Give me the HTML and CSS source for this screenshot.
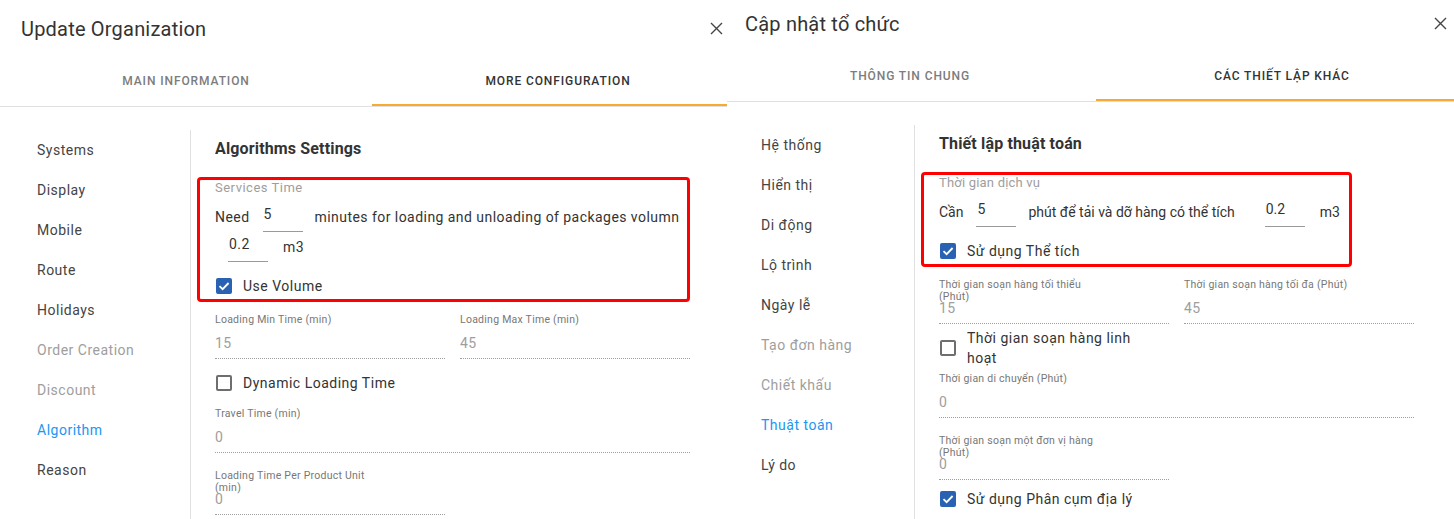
FILE: index.html
```html
<!DOCTYPE html>
<html lang="en">
<head>
<meta charset="utf-8">
<title>Update Organization</title>
<link rel="stylesheet" href="styles.css">
</head>
<body>
<div class="page">
  <section class="shot">
    <div class="dialog">
      <header class="dlg-head">
        <h1 class="dlg-title">Update Organization</h1>
        <button class="close" aria-label="Close"><svg width="13" height="13" viewBox="0 0 13 13"><path d="M1 1L12 12M12 1L1 12" stroke="#444" stroke-width="1.4" fill="none"/></svg></button>
      </header>
      <nav class="tabs">
        <div class="tab">MAIN INFORMATION</div>
        <div class="tab active">MORE CONFIGURATION</div>
      </nav>
      <div class="dlg-body">
        <ul class="side">
          <li>Systems</li>
          <li>Display</li>
          <li>Mobile</li>
          <li>Route</li>
          <li>Holidays</li>
          <li class="disabled">Order Creation</li>
          <li class="disabled">Discount</li>
          <li class="active">Algorithm</li>
          <li>Reason</li>
        </ul>
        <main class="content">
          <h2 class="sec-title">Algorithms Settings</h2>
          <div class="hl">
            <div class="sec-label">Services Time</div>
            <div class="inline-row">
              <span class="txt">Need</span>
              <span class="num">5</span>
              <span class="txt">minutes for loading and unloading of packages volumn</span>
              <span class="num">0.2</span>
              <span class="txt unit">m3</span>
            </div>
            <div class="check in-box">
              <span class="cb on"><svg width="16" height="16" viewBox="0 0 16 16"><path d="M3.5 8.2L6.6 11.2L12.6 5" stroke="#fff" stroke-width="1.8" fill="none"/></svg></span>
              <span class="check-label">Use Volume</span>
            </div>
          </div>
          <div class="fields">
            <div class="field">
              <div class="f-label">Loading Min Time (min)</div>
              <div class="f-value">15</div>
            </div>
            <div class="field">
              <div class="f-label">Loading Max Time (min)</div>
              <div class="f-value">45</div>
            </div>
            <div class="check row-check">
              <span class="cb"></span>
              <span class="check-label">Dynamic Loading Time</span>
            </div>
            <div class="field full">
              <div class="f-label">Travel Time (min)</div>
              <div class="f-value">0</div>
            </div>
            <div class="field last">
              <div class="f-label">Loading Time Per Product Unit (min)</div>
              <div class="f-value">0</div>
            </div>
          </div>
        </main>
      </div>
    </div>
  </section>

  <section class="shot">
    <div class="dialog shifted">
      <header class="dlg-head">
        <h1 class="dlg-title">Cập nhật tổ chức</h1>
        <button class="close" aria-label="Đóng"><svg width="13" height="13" viewBox="0 0 13 13"><path d="M1 1L12 12M12 1L1 12" stroke="#444" stroke-width="1.4" fill="none"/></svg></button>
      </header>
      <nav class="tabs">
        <div class="tab">THÔNG TIN CHUNG</div>
        <div class="tab active">CÁC THIẾT LẬP KHÁC</div>
      </nav>
      <div class="dlg-body">
        <ul class="side">
          <li>Hệ thống</li>
          <li>Hiển thị</li>
          <li>Di động</li>
          <li>Lộ trình</li>
          <li>Ngày lễ</li>
          <li class="disabled">Tạo đơn hàng</li>
          <li class="disabled">Chiết khấu</li>
          <li class="active">Thuật toán</li>
          <li>Lý do</li>
        </ul>
        <main class="content">
          <h2 class="sec-title">Thiết lập thuật toán</h2>
          <div class="hl">
            <div class="sec-label tight">Thời gian dịch vụ</div>
            <div class="inline-row tight">
              <span class="txt">Cần</span>
              <span class="num">5</span>
              <span class="txt wide-gap">phút để tải và dỡ hàng có thể tích</span>
              <span class="num">0.2</span>
              <span class="txt unit">m3</span>
            </div>
            <div class="check in-box">
              <span class="cb on"><svg width="16" height="16" viewBox="0 0 16 16"><path d="M3.5 8.2L6.6 11.2L12.6 5" stroke="#fff" stroke-width="1.8" fill="none"/></svg></span>
              <span class="check-label">Sử dụng Thể tích</span>
            </div>
          </div>
          <div class="fields">
            <div class="field">
              <div class="f-label">Thời gian soạn hàng tối thiểu (Phút)</div>
              <div class="f-value">15</div>
            </div>
            <div class="field">
              <div class="f-label">Thời gian soạn hàng tối đa (Phút)</div>
              <div class="f-value">45</div>
            </div>
            <div class="check row-check">
              <span class="cb"></span>
              <span class="check-label">Thời gian soạn hàng linh hoạt</span>
            </div>
            <div class="field full">
              <div class="f-label">Thời gian di chuyển (Phút)</div>
              <div class="f-value">0</div>
            </div>
            <div class="field last">
              <div class="f-label">Thời gian soạn một đơn vị hàng (Phút)</div>
              <div class="f-value">0</div>
            </div>
            <div class="check row-check">
              <span class="cb on"><svg width="16" height="16" viewBox="0 0 16 16"><path d="M3.5 8.2L6.6 11.2L12.6 5" stroke="#fff" stroke-width="1.8" fill="none"/></svg></span>
              <span class="check-label">Sử dụng Phân cụm địa lý</span>
            </div>
          </div>
        </main>
      </div>
    </div>
  </section>
</div>
</body>
</html>
```

FILE: styles.css
```css
* { box-sizing: border-box; }

html, body {
  margin: 0;
  padding: 0;
  background: #fff;
}

body {
  font-family: Roboto, "Noto Sans", "Liberation Sans", sans-serif;
  color: #333;
  font-size: 14px;
}

.page {
  display: flex;
  width: 1454px;
  height: 519px;
  overflow: hidden;
}

.shot {
  flex: none;
  width: 727px;
  height: 519px;
  overflow: hidden;
  background: #fff;
}

.dialog {
  width: 744px;
}

.dialog.shifted {
  margin-left: -3px;
  margin-top: -5px;
}

/* header */
.dlg-head {
  height: 57px;
  display: flex;
  align-items: center;
  justify-content: space-between;
  padding: 0 21px 0 21px;
}

.dlg-title {
  margin: 0;
  font-size: 20px;
  font-weight: 400;
  letter-spacing: 0.2px;
  color: #333;
  line-height: 24px;
}

.close {
  border: 0;
  background: none;
  padding: 0;
  width: 13px;
  height: 13px;
  display: flex;
}

/* tabs */
.tabs {
  display: flex;
  border-bottom: 1px solid #e0e0e0;
}

.tab {
  flex: 1;
  height: 49px;
  line-height: 48px;
  text-align: center;
  font-size: 12px;
  font-weight: 500;
  letter-spacing: 0.9px;
  color: #7c7c7c;
}

.tab.active {
  color: #333;
  box-shadow: inset 0 -2px 0 #f7a934;
}

/* body */
.dlg-body {
  display: flex;
  padding-top: 23px;
}

.side {
  list-style: none;
  margin: 0;
  padding: 0;
  flex: none;
  width: 191px;
  min-height: 420px;
  border-right: 1px solid #e0e0e0;
}

.side li {
  height: 40px;
  line-height: 40px;
  padding-left: 37px;
  font-size: 14px;
  letter-spacing: 0.5px;
  color: #444;
}

.side li.disabled { color: #9e9e9e; }
.side li.active { color: #2196f3; }

.content {
  padding: 9px 0 0 24px;
  width: 499px;
}

.sec-title {
  margin: 0 0 18px;
  font-size: 16px;
  line-height: 20px;
  font-weight: 700;
  letter-spacing: 0.15px;
  color: #333;
}

/* highlighted block */
.hl {
  width: fit-content;
  max-width: 493px;
  margin-left: -18px;
  padding: 0 5px 1px 15px;
  border: 3px solid #ff0000;
  border-radius: 4px;
}

.sec-label {
  font-size: 13px;
  line-height: 15px;
  letter-spacing: 0.5px;
  color: #9e9e9e;
}

.sec-label.tight { letter-spacing: 0.2px; }

.inline-row {
  display: flex;
  flex-wrap: wrap;
  align-items: flex-start;
  margin-top: 7px;
  letter-spacing: 0.45px;
}

.inline-row.tight { letter-spacing: 0; }

.txt {
  line-height: 30px;
  font-size: 14px;
  color: #333;
  white-space: nowrap;
}

.txt.unit { margin-left: 3px; }
.inline-row.tight .txt.unit { margin-right: 4px; }
.txt.wide-gap { margin-right: 17px; }

.num {
  width: 40px;
  height: 30px;
  margin: 0 12px 0 13px;
  padding-left: 1px;
  line-height: 24px;
  border-bottom: 1px solid #9a9a9a;
  color: #333;
  font-size: 14px;
}

/* checkbox */
.check {
  display: flex;
  align-items: center;
  height: 24px;
  padding-left: 1px;
}

.check.in-box { margin-top: 12px; }

.cb {
  flex: none;
  width: 16px;
  height: 16px;
  border: 2px solid #6e6e6e;
  border-radius: 2px;
  display: flex;
  align-items: center;
  justify-content: center;
}

.cb.on {
  border: 0;
  background: #2a62b3;
}

.check-label {
  margin-left: 11px;
  font-size: 14px;
  line-height: 20px;
  letter-spacing: 0.5px;
  color: #333;
}

.row-check .check-label { max-width: 172px; }

/* fields */
.fields {
  display: grid;
  grid-template-columns: 230px 230px;
  column-gap: 15px;
  margin-top: 12px;
  width: 475px;
}

.row-check {
  grid-column: 1 / span 2;
  margin-bottom: 13px;
}

.field {
  position: relative;
  padding-top: 16px;
  border-bottom: 1px dotted #9e9e9e;
  margin-bottom: 12px;
}

.field.full {
  grid-column: 1 / span 2;
  margin-bottom: 17px;
}

.field.last { margin-bottom: 7px; grid-column: 1; }

.f-label {
  position: absolute;
  top: 0;
  left: 0;
  max-width: 170px;
  font-size: 10.5px;
  line-height: 12px;
  letter-spacing: 0.25px;
  color: #777;
}

.f-value {
  height: 28px;
  line-height: 27px;
  font-size: 14px;
  letter-spacing: 0.3px;
  color: #9e9e9e;
}
```
